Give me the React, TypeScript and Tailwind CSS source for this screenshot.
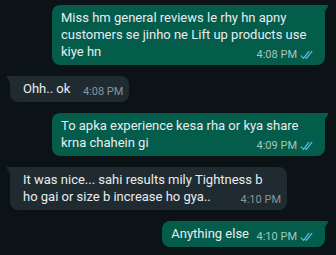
import React from "react";

type Msg = {
  out: boolean;
  lines: string[];
  time: string;
  width?: string;
};

const messages: Msg[] = [
  {
    out: true,
    lines: ["Miss hm general reviews le rhy hn apny", "customers se jinho ne Lift up products use", "kiye hn"],
    time: "4:08 PM",
    width: "w-[273px]",
  },
  { out: false, lines: ["Ohh.. ok"], time: "4:08 PM" },
  {
    out: true,
    lines: ["To apka experience kesa rha or kya share", "krna chahein gi"],
    time: "4:09 PM",
    width: "w-[273px]",
  },
  {
    out: false,
    lines: ["It was nice... sahi results mily Tightness b", "ho gai or size b increase ho gya.."],
    time: "4:10 PM",
    width: "w-[277px]",
  },
  { out: true, lines: ["Anything else"], time: "4:10 PM" },
];

const Ticks = () => (
  <svg width="15" height="10" viewBox="0 0 16 11" fill="none" stroke="#53bdeb" strokeWidth="1.4" strokeLinecap="round">
    <path d="M1 6.5 L3.6 9.2 L9.5 1.6" />
    <path d="M6.2 8.6 L6.8 9.2 L12.8 1.6" />
  </svg>
);

const Bubble = ({ m }: { m: Msg }) => {
  const bg = m.out ? "bg-[#045c4b]" : "bg-[#1f2b31]";
  return (
    <div className={`flex ${m.out ? "justify-end pr-[11px]" : "justify-start pl-[10px]"}`}>
      <div
        className={`relative ${m.width ?? "w-fit"} ${bg} rounded-[8px] ${
          m.out ? "rounded-tr-none pl-[9px] pr-[10px]" : "rounded-tl-none pl-[13px] pr-[7px]"
        } pt-[4px] pb-[5px]`}
      >
        {/* tail */}
        <svg
          className={`absolute top-0 ${m.out ? "-right-[4px]" : "-left-[4px] -scale-x-100"}`}
          width="5"
          height="8"
          viewBox="0 0 5 8"
        >
          <path d="M0 0 H4 Q5 0 4.3 1 L0 8 Z" fill={m.out ? "#045c4b" : "#1f2b31"} />
        </svg>
        <p className="text-[13px] leading-[17px] text-[#e9edef] whitespace-nowrap">
          {m.lines.map((l, i) => (
            <React.Fragment key={i}>
              {l}
              {i < m.lines.length - 1 ? <br /> : null}
            </React.Fragment>
          ))}
          <span className={`inline-block ${m.out ? "w-[66px]" : "w-[52px]"}`} />
        </p>
        <div
          className={`absolute bottom-[4px] ${m.out ? "right-[10px]" : "right-[6px]"} flex items-center gap-[3px] text-[11px] leading-[12px] ${
            m.out ? "text-[#a6c6bf]" : "text-[#8696a0]"
          }`}
        >
          <span>{m.time}</span>
          {m.out && <Ticks />}
        </div>
      </div>
    </div>
  );
};

export default function App() {
  return (
    <div className="w-[336px] h-[255px] overflow-hidden bg-[#0b1317] pt-[5px] flex flex-col gap-[11px] font-['Roboto','Noto_Sans',sans-serif]">
      {messages.map((m, i) => (
        <Bubble key={i} m={m} />
      ))}
    </div>
  );
}
